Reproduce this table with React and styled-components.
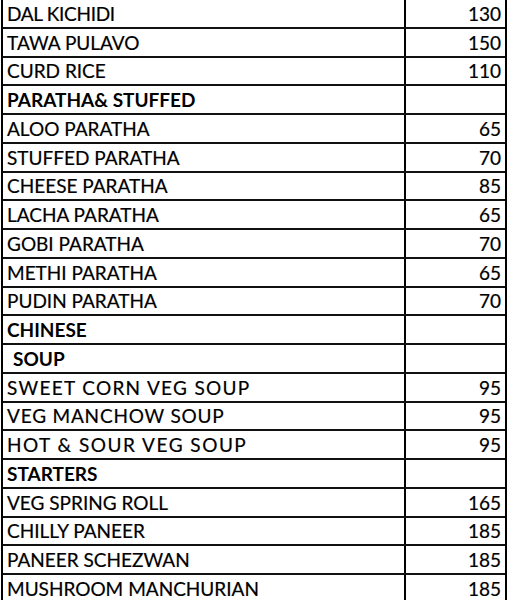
import React from "react";
import styled, { createGlobalStyle } from "styled-components";

const Global = createGlobalStyle`
  html, body { margin: 0; padding: 0; background: #fff; }
  body { font-family: Lato, "Liberation Sans", sans-serif; color: #000; overflow: hidden; }
`;

const Sheet = styled.div`
  margin-left: 1px;
  width: 506px;
  border-left: 2px solid #000;
  border-right: 2px solid #000;
  box-sizing: border-box;
`;

const Row = styled.div`
  display: grid;
  grid-template-columns: 403px 1fr;
  height: 28.75px;
  box-sizing: border-box;
  border-bottom: 2px solid #111;
`;

const Name = styled.div`
  display: flex;
  align-items: center;
  padding-left: ${(p) => (p.$indent ? 10 : 4)}px;
  font-size: 19px;
  font-weight: ${(p) => (p.$bold ? 700 : 400)};
  border-right: 2px solid #000;
  white-space: pre;
  letter-spacing: ${(p) => p.$spacing}px;
  -webkit-text-stroke: ${(p) => (p.$bold ? "0" : "0.2px")} #000;
`;

const Price = styled.div`
  display: flex;
  align-items: center;
  justify-content: flex-end;
  padding-right: 4px;
  font-size: 19px;
  -webkit-text-stroke: 0.2px #000;
`;

const rows = [
  ["DAL KICHIDI", "130", "", -0.3],
  ["TAWA PULAVO", "150"],
  ["CURD RICE", "110"],
  ["PARATHA& STUFFED", "", "b"],
  ["ALOO PARATHA", "65"],
  ["STUFFED PARATHA", "70"],
  ["CHEESE PARATHA", "85"],
  ["LACHA PARATHA", "65"],
  ["GOBI PARATHA", "70"],
  ["METHI PARATHA", "65"],
  ["PUDIN PARATHA", "70"],
  ["CHINESE", "", "b"],
  ["SOUP", "", "bi"],
  ["SWEET CORN VEG SOUP", "95", "", 1.3],
  ["VEG MANCHOW SOUP", "95", "", 0.8],
  ["HOT & SOUR VEG SOUP", "95", "", 1.5],
  ["STARTERS", "", "b"],
  ["VEG SPRING ROLL", "165"],
  ["CHILLY PANEER", "185"],
  ["PANEER SCHEZWAN", "185"],
  ["MUSHROOM MANCHURIAN", "185"],
];

export default function App() {
  return (
    <>
      <Global />
      <Sheet>
        {rows.map(([name, price, flag, sp], i) => (
          <Row key={i}>
            <Name $bold={!!flag} $indent={flag === "bi"} $spacing={sp || 0}>
              {name}
            </Name>
            <Price>{price}</Price>
          </Row>
        ))}
      </Sheet>
    </>
  );
}
